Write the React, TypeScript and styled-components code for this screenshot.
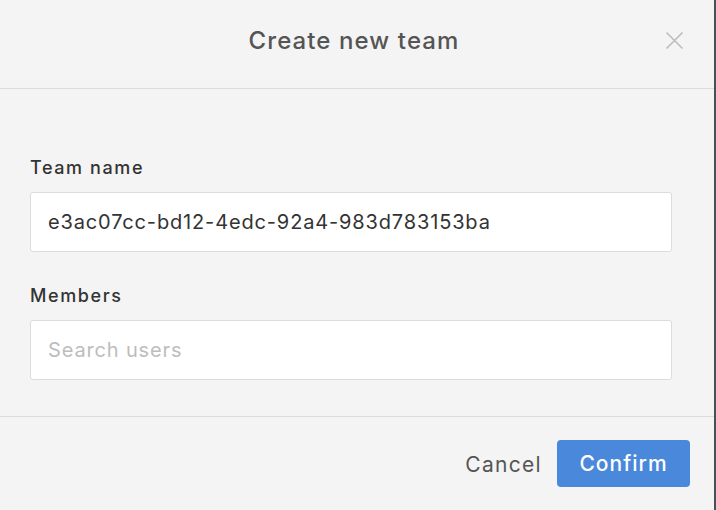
import React from "react";
import styled, { createGlobalStyle } from "styled-components";

const Global = createGlobalStyle`
  html, body { margin: 0; padding: 0; background: #4b4f58; }
  body { font-family: Inter, "Noto Sans", sans-serif; }
  * { box-sizing: border-box; }
`;

const Modal = styled.div`
  width: 714px;
  height: 510px;
  background: #f4f4f4;
  display: flex;
  flex-direction: column;
`;

const Header = styled.header`
  height: 89px;
  border-bottom: 1px solid #dcdcdc;
  display: flex;
  align-items: center;
  justify-content: center;
  position: relative;
  padding-bottom: 8px;
`;

const Title = styled.h1`
  margin: 0;
  font-size: 24px;
  font-weight: 500;
  color: #555;
  letter-spacing: 1.1px;
  padding-right: 6px;
`;

const Close = styled.button`
  position: absolute;
  right: 30px;
  top: 31px;
  width: 19px;
  height: 19px;
  padding: 0;
  border: 0;
  background: none;
  display: flex;
  align-items: center;
  justify-content: center;
`;

const Body = styled.div`
  flex: 1;
  padding: 68px 42px 0 30px;
  display: flex;
  flex-direction: column;
`;

const Field = styled.div`
  display: flex;
  flex-direction: column;
  margin-bottom: 33px;
`;

const Label = styled.label`
  font-size: 18px;
  font-weight: 500;
  color: #333;
  line-height: 22px;
  margin-bottom: 13px;
  letter-spacing: 1.6px;
`;

const Input = styled.input`
  height: 60px;
  width: 100%;
  border: 1px solid #dcdcdc;
  border-radius: 3px;
  background: #fff;
  padding: 0 17px;
  font-family: Inter, "Noto Sans", sans-serif;
  font-size: 20px;
  color: #333;
  letter-spacing: 0.85px;
  outline: none;
  &::placeholder { color: #bdbdbd; }
`;

const Footer = styled.footer`
  height: 94px;
  border-top: 1px solid #dcdcdc;
  display: flex;
  justify-content: flex-end;
  align-items: flex-start;
  padding: 23px 24px 0 0;
  gap: 15px;
`;

const TextButton = styled.button`
  height: 48px;
  border: 0;
  background: none;
  padding: 0;
  font-family: Inter, "Noto Sans", sans-serif;
  font-size: 21px;
  color: #555;
  letter-spacing: 1.3px;
`;

const PrimaryButton = styled.button`
  width: 133px;
  height: 47px;
  border: 0;
  border-radius: 4px;
  background: #4a88db;
  color: #fff;
  font-family: Inter, "Noto Sans", sans-serif;
  font-size: 21px;
  font-weight: 500;
  letter-spacing: 1px;
`;

export default function App() {
  return (
    <>
      <Global />
      <Modal>
        <Header>
          <Title>Create new team</Title>
          <Close aria-label="Close">
            <svg width="19" height="19" viewBox="0 0 19 19">
              <path d="M1.5 1.5 L17.5 17.5 M17.5 1.5 L1.5 17.5" stroke="#bcbcbc" strokeWidth="1.6" fill="none" />
            </svg>
          </Close>
        </Header>
        <Body>
          <Field>
            <Label>Team name</Label>
            <Input defaultValue="e3ac07cc-bd12-4edc-92a4-983d783153ba" />
          </Field>
          <Field>
            <Label>Members</Label>
            <Input placeholder="Search users" />
          </Field>
        </Body>
        <Footer>
          <TextButton>Cancel</TextButton>
          <PrimaryButton>Confirm</PrimaryButton>
        </Footer>
      </Modal>
    </>
  );
}
